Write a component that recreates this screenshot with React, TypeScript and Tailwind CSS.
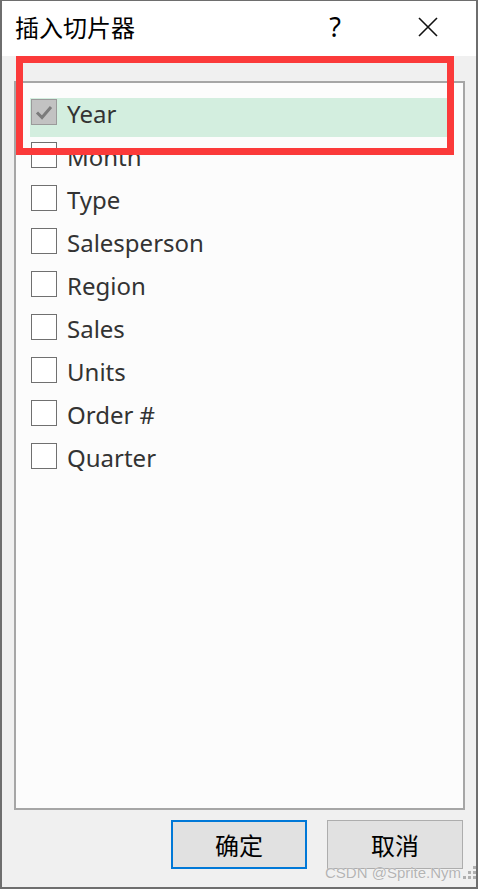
import React from "react";

const fields = ["Year", "Month", "Type", "Salesperson", "Region", "Sales", "Units", "Order #", "Quarter"];

export default function App() {
  const ui = { fontFamily: '"Noto Sans", "Noto Sans CJK SC", sans-serif' };
  const cjk = { fontFamily: '"Noto Sans CJK SC", "Noto Sans", sans-serif' };
  return (
    <div className="relative w-[478px] h-[889px] overflow-hidden">
      <div className="w-full h-full flex flex-col bg-[#f0f0f0] border-l-2 border-r-2 border-t border-b-2 border-[#6e6e6e]">
        <div className="h-[55px] bg-white flex items-center shrink-0">
          <div className="ml-[13px] text-[24px] leading-[30px] text-black mt-[-3px]" style={cjk}>
            插入切片器
          </div>
          <div className="ml-auto w-[20px] text-center text-[27px] leading-[30px] text-black mr-[72px] mt-[-4px]" style={ui}>
            ?
          </div>
          <svg width="22" height="22" viewBox="0 0 22 22" className="mr-[37px] mt-[-3px]">
            <path d="M2 2 L20 20 M20 2 L2 20" stroke="#111" strokeWidth="1.6" fill="none" />
          </svg>
        </div>
        <div className="flex-1 flex flex-col">
          <div className="ml-[12px] mr-[11px] mt-[25px] h-[729px] border-2 border-[#a6a6a6] bg-[#fcfcfc] pt-[15px]">
            {fields.map((f, i) => (
              <div key={f} className="ml-[14px] mr-[16px] h-[43px] relative">
                {i === 0 && <div className="absolute left-0 right-0 top-0 h-[39px] bg-[#d3eedf]" />}
                <div className="relative flex items-start">
                  {i === 0 ? (
                    <div className="ml-[1px] mt-[1px] w-[26px] h-[26px] border border-[#9a9a9a] bg-[#c2c2c2] flex items-center justify-center">
                      <svg width="24" height="24" viewBox="0 0 24 24">
                        <path d="M5 12.5 L10 17.5 L19 7" stroke="#7b7b7b" strokeWidth="3" fill="none" />
                      </svg>
                    </div>
                  ) : (
                    <div className="ml-[1px] mt-[1px] w-[26px] h-[26px] border border-[#707070] bg-white" />
                  )}
                  <div className="ml-[10px] mt-[2px] text-[24px] leading-[28px] text-[#333333]" style={ui}>
                    {f}
                  </div>
                </div>
              </div>
            ))}
          </div>
          <div className="mt-[10px] mr-[13px] flex justify-end gap-[20px]">
            <button className="w-[136px] h-[49px] border-2 border-[#0078d7] bg-[#e1e1e1] flex items-center justify-center text-[24px] text-black" style={cjk}>
              确定
            </button>
            <button className="w-[136px] h-[49px] border border-[#adadad] bg-[#e1e1e1] flex items-center justify-center text-[24px] text-black" style={cjk}>
              取消
            </button>
          </div>
        </div>
      </div>
      <div className="absolute left-[463px] top-[866px] flex flex-col gap-[2px]">
        <div className="flex gap-[2px] justify-end">
          <div className="w-[3px] h-[3px] bg-[#b0b0b0]" />
        </div>
        <div className="flex gap-[2px] justify-end">
          <div className="w-[3px] h-[3px] bg-[#b0b0b0]" />
          <div className="w-[3px] h-[3px] bg-[#b0b0b0]" />
        </div>
        <div className="flex gap-[2px] justify-end">
          <div className="w-[3px] h-[3px] bg-[#b0b0b0]" />
          <div className="w-[3px] h-[3px] bg-[#b0b0b0]" />
          <div className="w-[3px] h-[3px] bg-[#b0b0b0]" />
        </div>
      </div>
      <div className="absolute left-[16px] top-[56px] w-[438px] h-[99px] border-[7px] border-[#fb3a3a]" />
      <div
        className="absolute left-[325px] top-[863px] text-[15px] leading-[20px] text-[#b4b4b4] whitespace-nowrap"
        style={{ fontFamily: '"Liberation Sans", Arial, sans-serif', textShadow: "0 0 1px #ffffff" }}
      >
        CSDN @Sprite.Nym
      </div>
    </div>
  );
}
